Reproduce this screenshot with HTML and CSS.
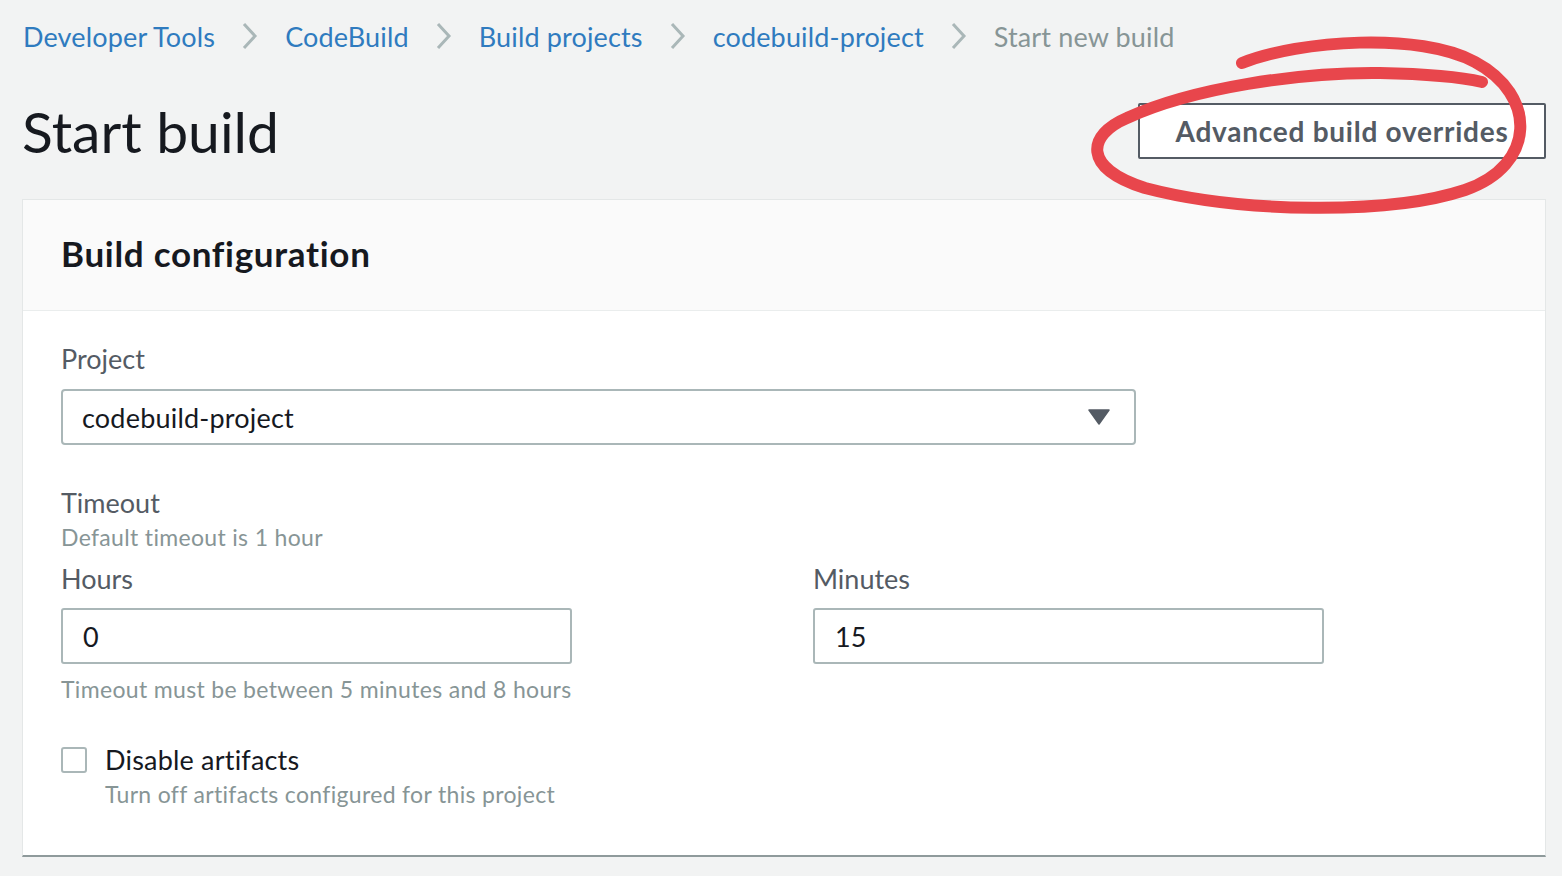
FILE: index.html
```html
<!DOCTYPE html>
<html>
<head>
<meta charset="utf-8">
<link rel="stylesheet" href="styles.css">
</head>
<body>
<div class="page">
  <nav class="crumbs">
    <a class="crumb">Developer Tools</a>
    <svg class="chev" width="20" height="30" viewBox="0 0 20 30"><path d="M4 3 L15 15 L4 27" fill="none" stroke="#aab7b8" stroke-width="3"/></svg>
    <a class="crumb">CodeBuild</a>
    <svg class="chev" width="20" height="30" viewBox="0 0 20 30"><path d="M4 3 L15 15 L4 27" fill="none" stroke="#aab7b8" stroke-width="3"/></svg>
    <a class="crumb">Build projects</a>
    <svg class="chev" width="20" height="30" viewBox="0 0 20 30"><path d="M4 3 L15 15 L4 27" fill="none" stroke="#aab7b8" stroke-width="3"/></svg>
    <a class="crumb">codebuild-project</a>
    <svg class="chev" width="20" height="30" viewBox="0 0 20 30"><path d="M4 3 L15 15 L4 27" fill="none" stroke="#aab7b8" stroke-width="3"/></svg>
    <span class="crumb current">Start new build</span>
  </nav>
  <header class="head">
    <h1 class="title">Start build</h1>
    <button class="btn">Advanced build overrides</button>
  </header>
  <section class="panel">
    <div class="panel-head"><h2>Build configuration</h2></div>
    <div class="panel-body">
      <div class="label">Project</div>
      <div class="select"><span>codebuild-project</span><svg width="22" height="16" viewBox="0 0 22 16"><path d="M1 1 H21 L11 15 Z" fill="#545b64" stroke="#545b64" stroke-width="1.5" stroke-linejoin="round"/></svg></div>
      <div class="label gap-top">Timeout</div>
      <div class="desc">Default timeout is 1 hour</div>
      <div class="cols">
        <div>
          <div class="label small-top">Hours</div>
          <div class="input">0</div>
          <div class="desc help">Timeout must be between 5 minutes and 8 hours</div>
        </div>
        <div>
          <div class="label small-top">Minutes</div>
          <div class="input">15</div>
        </div>
      </div>
      <div class="check-row">
        <span class="box"></span>
        <div>
          <div class="check-label">Disable artifacts</div>
          <div class="desc">Turn off artifacts configured for this project</div>
        </div>
      </div>
    </div>
  </section>
</div>
<svg class="scribble" width="1562" height="876" viewBox="0 0 1562 876">
  <path d="M1242 63 C1300 40 1420 32 1475 62 C1537 95 1537 165 1465 190 C1390 215 1240 213 1145 188 C1082 168 1087 135 1127 118 C1192 88 1300 72 1380 73 C1430 74 1465 78 1482 82" fill="none" stroke="#e8464c" stroke-width="12" stroke-linecap="round"/>
</svg>
</body>
</html>
```
FILE: styles.css
```css
html, body {
  margin: 0;
  padding: 0;
  background: #f2f3f3;
  font-family: Lato, "Open Sans", sans-serif;
  color: #16191f;
}
.page {
  padding: 0 16px 0 22px;
}
.crumbs {
  height: 72px;
  display: flex;
  align-items: center;
  gap: 25px;
  padding-left: 1px;
}
.crumb {
  font-size: 27px;
  letter-spacing: 0.15px;
  color: #2f7bbf;
  text-decoration: none;
}
.crumb.current {
  color: #879596;
}
.chev { display: block; }
.head {
  display: flex;
  justify-content: space-between;
  align-items: center;
  padding-top: 31px;
  height: 56px;
  margin-bottom: 40px;
}
.title {
  margin: 0;
  font-size: 57px;
  font-weight: 400;
  line-height: 56px;
  color: #16191f;
}
.btn {
  height: 56px;
  width: 408px;
  border: 2px solid #545b64;
  border-radius: 2px;
  background: #fff;
  color: #545b64;
  font-family: inherit;
  font-size: 28px;
  font-weight: 700;
  letter-spacing: 0.75px;
  padding: 0;
  text-align: center;
}
.panel {
  background: #fff;
  border: 1px solid #e4e7e7;
  border-bottom: 2px solid #8f9a9b;
}
.panel-head {
  height: 111px;
  box-sizing: border-box;
  padding: 0 0 4px 38px;
  background: #fafafa;
  border-bottom: 1px solid #eaeded;
  display: flex;
  align-items: center;
}
.panel-head h2 {
  margin: 0;
  font-size: 35px;
  font-weight: 700;
  letter-spacing: 0.7px;
  color: #16191f;
}
.panel-body {
  padding: 31px 38px 46px;
}
.label {
  font-size: 27px;
  line-height: 34px;
  color: #545b64;
}
.gap-top { margin-top: 41px; }
.small-top { margin-top: 10px; }
.desc {
  font-size: 23px;
  line-height: 30px;
  letter-spacing: 0.33px;
  color: #879596;
  margin-top: 2px;
}
.select {
  margin-top: 13px;
  width: 1075px;
  height: 56px;
  box-sizing: border-box;
  border: 2px solid #aab7b8;
  border-radius: 4px;
  display: flex;
  align-items: center;
  justify-content: space-between;
  padding: 0 24px 0 19px;
  font-size: 27px;
  letter-spacing: 0.2px;
}
.cols {
  display: grid;
  grid-template-columns: 752px 1fr;
}
.input {
  margin-top: 12px;
  width: 511px;
  height: 56px;
  box-sizing: border-box;
  border: 2px solid #aab7b8;
  border-radius: 3px;
  display: flex;
  align-items: center;
  padding-left: 20px;
  font-size: 27px;
  color: #16191f;
}
.help { margin-top: 10px; }
.check-row {
  margin-top: 39px;
  display: flex;
  gap: 18px;
  align-items: flex-start;
}
.box {
  width: 22px;
  height: 22px;
  border: 2px solid #aab7b8;
  border-radius: 3px;
  margin-top: 4px;
  background: #fff;
}
.check-label {
  font-size: 27px;
  line-height: 34px;
  letter-spacing: 0.2px;
  color: #16191f;
}
.scribble {
  position: absolute;
  left: 0;
  top: 0;
  pointer-events: none;
}
```
